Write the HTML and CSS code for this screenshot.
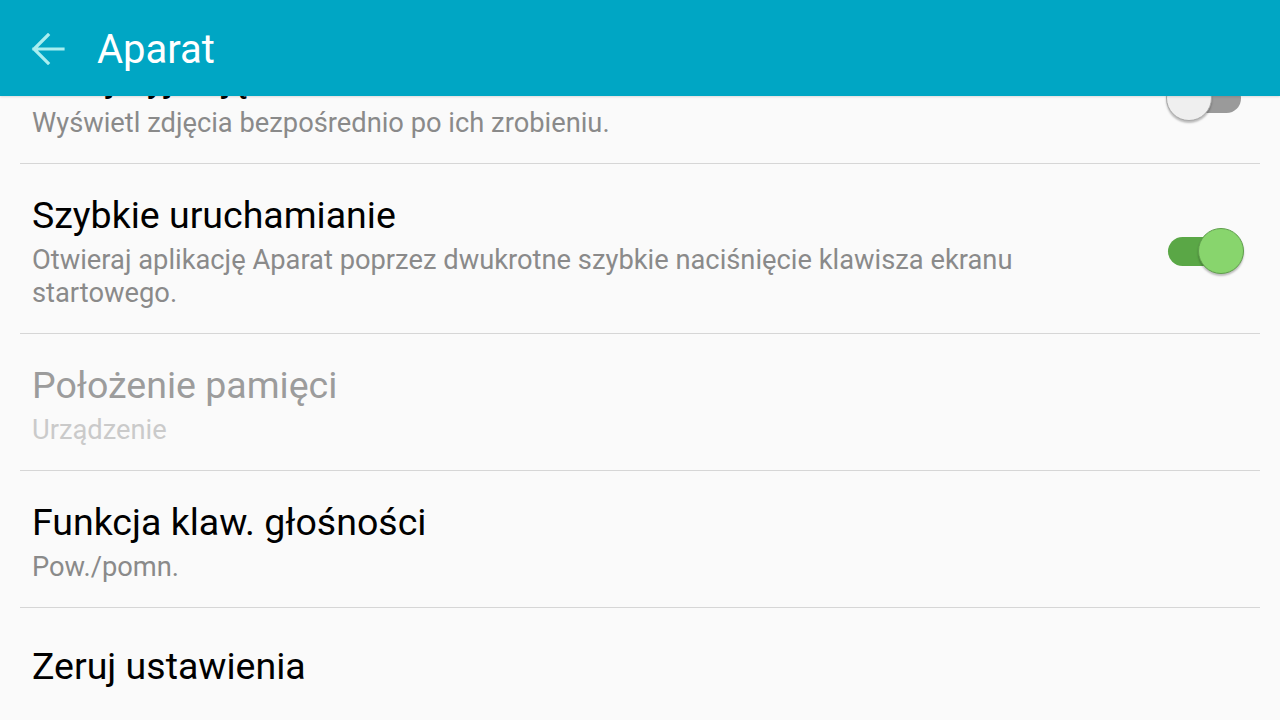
FILE: index.html
```html
<!DOCTYPE html>
<html lang="pl">
<head>
  <meta charset="UTF-8">
  <meta name="viewport" content="width=device-width, initial-scale=1.0">
  <title>Aparat</title>
  <link rel="stylesheet" href="styles.css">
</head>
<body>
  <!-- Top bar -->
  <header class="app-bar">
    <svg class="back-icon" width="34" height="32" viewBox="0 0 34 32">
      <path d="M32 16H3M17 2L3 16l14 14" fill="none" stroke="#a9eef0" stroke-width="3.2" stroke-linecap="square"/>
    </svg>
    <h1 class="app-title">Aparat</h1>
  </header>

  <!-- Settings list, scrolled a little so the first title is hidden -->
  <main class="viewport">
    <ul class="settings">
      <li class="setting">
        <div class="setting-text">
          <div class="setting-title">Przejrzyj zdjęcia</div>
          <div class="setting-summary">Wyświetl zdjęcia bezpośrednio po ich zrobieniu.</div>
        </div>
        <span class="switch"></span>
      </li>
      <li class="setting">
        <div class="setting-text">
          <div class="setting-title">Szybkie uruchamianie</div>
          <div class="setting-summary">Otwieraj aplikację Aparat poprzez dwukrotne szybkie naciśnięcie klawisza ekranu startowego.</div>
        </div>
        <span class="switch on"></span>
      </li>
      <li class="setting disabled">
        <div class="setting-text">
          <div class="setting-title">Położenie pamięci</div>
          <div class="setting-summary">Urządzenie</div>
        </div>
      </li>
      <li class="setting">
        <div class="setting-text">
          <div class="setting-title">Funkcja klaw. głośności</div>
          <div class="setting-summary">Pow./pomn.</div>
        </div>
      </li>
      <li class="setting single">
        <div class="setting-text">
          <div class="setting-title">Zeruj ustawienia</div>
        </div>
      </li>
    </ul>
  </main>
</body>
</html>
```

FILE: styles.css
```css
body {
  margin: 0;
  height: 720px;
  background: #fafafa;
  font-family: Roboto, "Liberation Sans", sans-serif;
  overflow: hidden;
  display: flex;
  flex-direction: column;
}

.app-bar {
  flex: none;
  height: 96px;
  background: #00a6c4;
  display: flex;
  align-items: center;
  padding: 3px 0 0 31px;
  box-sizing: border-box;
  box-shadow: 0 1px 2px rgba(0, 0, 0, 0.12);
  position: relative;
  z-index: 1;
}

.back-icon {
  display: block;
  margin-top: -2px;
}

.app-title {
  margin: 0 0 0 32px;
  font-size: 40px;
  font-weight: 400;
  color: #fff;
  line-height: 48px;
}

.viewport {
  flex: 1;
  overflow: hidden;
}

.settings {
  list-style: none;
  margin: -69px 20px 0;
  padding: 0;
}

.setting {
  display: flex;
  align-items: center;
  gap: 40px;
  padding: 29px 16px 23px 12px;
  border-bottom: 1px solid #d6d6d6;
}

.setting.single {
  padding-top: 36px;
  border-bottom: none;
}

.setting-text {
  flex: 1;
}

.setting-title {
  font-size: 37.5px;
  line-height: 44px;
  color: #000;
  margin-bottom: 7px;
}

.setting-summary {
  font-size: 27.3px;
  line-height: 33px;
  color: #8a8a8a;
  padding-right: 70px;
}

.disabled .setting-title {
  color: #9c9c9c;
}

.disabled .setting-summary {
  color: #cacaca;
}

.switch {
  position: relative;
  flex: none;
  width: 73px;
  height: 29px;
  margin: 0 3px 0 2px;
  border-radius: 15px;
  background: #9a9a9a;
}

.switch::after {
  content: "";
  position: absolute;
  top: -9px;
  left: -2px;
  width: 44px;
  height: 44px;
  border-radius: 50%;
  background: #efefef;
  border: 1px solid #a8a8a8;
  box-shadow: 0 2px 2px rgba(0, 0, 0, 0.25);
}

.switch.on {
  background: #5aa746;
}

.switch.on::after {
  left: 30px;
  background: #88d56d;
  border-color: #5f9e4c;
}
```
